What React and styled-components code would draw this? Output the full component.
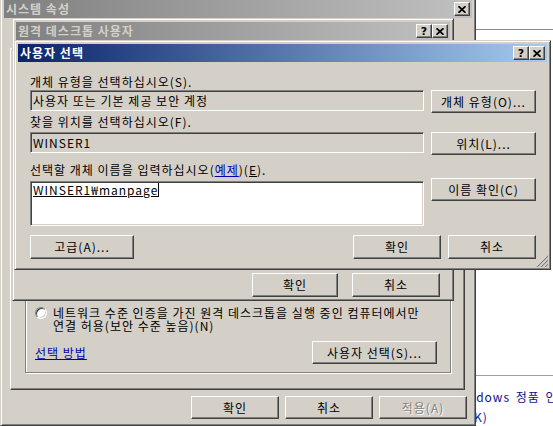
import React from "react";
import styled, { createGlobalStyle } from "styled-components";

const GlobalStyle = createGlobalStyle`
  html, body {
    margin: 0;
    padding: 0;
    background: #fff;
  }
  body {
    font-family: "Noto Sans CJK KR", "Noto Sans", sans-serif;
    font-size: 12px;
    letter-spacing: 1px;
    color: #000;
  }
`;

const Desktop = styled.div`
  position: relative;
  width: 553px;
  height: 426px;
  overflow: hidden;
  background: #fff;
`;

// page behind the dialogs, only its right edge shows
const BackPane = styled.div`
  position: absolute;
  left: 452px;
  top: 0;
  right: 0;
  bottom: 0;
  display: flex;
  flex-direction: column;
  overflow: hidden;
`;

const BackBand = styled.div`
  flex: none;
  height: ${(p) => p.$h}px;
  border-bottom: 1px solid ${(p) => p.$line};
`;

const BackText = styled.div`
  color: #10108a;
  line-height: 20px;
  word-spacing: 2px;
  white-space: nowrap;
  padding-left: ${(p) => p.$indent || 0}px;
  margin-top: ${(p) => p.$top || 0}px;
`;

const Window = styled.div`
  position: absolute;
  left: ${(p) => p.$x}px;
  top: ${(p) => p.$y}px;
  width: ${(p) => p.$w}px;
  height: ${(p) => p.$h}px;
  box-sizing: border-box;
  background: #d4d0c8;
  border: 1px solid;
  border-color: #d4d0c8 #404040 #404040 #d4d0c8;
  box-shadow: inset 1px 1px #fff, inset -1px -1px #808080;
  padding: 3px;
  display: flex;
  flex-direction: column;
`;

const TitleBar = styled.div`
  flex: none;
  height: 18px;
  display: flex;
  align-items: center;
  padding: 0 2px 0 2px;
  background: ${(p) =>
    p.$active
      ? "linear-gradient(to right, #0a246a, #a6caf0)"
      : "linear-gradient(to right, #808080, #c0c0c0)"};
  color: ${(p) => (p.$active ? "#fff" : "#d4d0c8")};
  font-weight: bold;
`;

const TitleText = styled.span`
  flex: 1;
  line-height: 18px;
  white-space: nowrap;
  overflow: hidden;
`;

const TitleButton = styled.div`
  flex: none;
  width: 16px;
  height: 14px;
  box-sizing: border-box;
  background: #d4d0c8;
  border: 1px solid;
  border-color: #fff #404040 #404040 #fff;
  box-shadow: inset -1px -1px #808080;
  display: flex;
  align-items: center;
  justify-content: center;
  color: #000;
  font: bold 11px "DejaVu Sans", sans-serif;
  letter-spacing: 0;
  line-height: 1;
`;

const CloseIcon = () => (
  <svg width="8" height="7" viewBox="0 0 8 7">
    <path d="M0.5 0.2 L7.5 6.8 M7.5 0.2 L0.5 6.8" stroke="#000" strokeWidth="1.7" />
  </svg>
);

const PushButton = styled.button`
  flex: none;
  box-sizing: border-box;
  width: ${(p) => p.$w}px;
  height: ${(p) => p.$h || 23}px;
  margin: ${(p) => p.$m || "0"};
  padding: 0;
  background: #d4d0c8;
  border: 1px solid;
  border-color: #fff #404040 #404040 #fff;
  box-shadow: inset -1px -1px #808080;
  font: 12px "Noto Sans CJK KR", "Noto Sans", sans-serif;
  letter-spacing: 1px;
  line-height: 14px;
  color: ${(p) => (p.$off ? "#808080" : "#000")};
  text-shadow: ${(p) => (p.$off ? "1px 1px #fff" : "none")};
  display: flex;
  align-items: center;
  justify-content: center;
  white-space: nowrap;
`;

/* ---------- 시스템 속성 ---------- */

const SysBody = styled.div`
  flex: 1;
  display: flex;
  flex-direction: column;
  padding: 0 5px 3px 6px;
`;

const TabPanel = styled.div`
  flex: 1;
  margin: 30px 2px 0 0;
  border: 1px solid;
  border-color: #fff #404040 #404040 #fff;
  box-shadow: inset -1px -1px #808080;
  display: flex;
  flex-direction: column;
  padding: 0 13px 16px 14px;
`;

const GroupBox = styled.div`
  flex: 1;
  margin-top: 40px;
  border: 1px solid #808080;
  box-shadow: inset 1px 1px #fff, 1px 1px #fff;
  display: flex;
  flex-direction: column;
  justify-content: flex-end;
  padding: 0 13px 8px 9px;
`;

const RadioRow = styled.div`
  display: flex;
  align-items: flex-start;
  gap: 6px;
`;

const Radio = styled.span`
  flex: none;
  width: 12px;
  height: 12px;
  box-sizing: border-box;
  margin-top: 1px;
  border-radius: 50%;
  background: #fff;
  border: 1px solid;
  border-color: #808080 #fff #fff #808080;
  box-shadow: inset 1px 1px #404040, inset -1px -1px #d4d0c8;
`;

const RadioText = styled.div`
  line-height: 13px;
  white-space: nowrap;
`;

const LinkRow = styled.div`
  display: flex;
  align-items: center;
  justify-content: space-between;
  margin-top: 9px;
`;

const Link = styled.span`
  color: #0000b0;
  text-decoration: underline;
  line-height: 14px;
`;

const ButtonRow = styled.div`
  flex: none;
  display: flex;
  justify-content: flex-end;
  align-items: center;
  gap: ${(p) => p.$gap || 0}px;
  margin-top: ${(p) => p.$top || 0}px;
  padding-right: ${(p) => p.$right || 0}px;
`;

/* ---------- 원격 데스크톱 사용자 ---------- */

const Filler = styled.div`
  flex: 1;
`;

/* ---------- 사용자 선택 ---------- */

const PickerBody = styled.div`
  flex: 1;
  display: grid;
  grid-template-columns: 1fr 105px;
  column-gap: 7px;
  align-content: start;
  align-items: start;
  padding: 13px 11px 0 12px;
`;

const Label = styled.div`
  grid-column: 1 / -1;
  line-height: 14px;
  white-space: nowrap;
  margin-top: ${(p) => p.$top || 0}px;
  margin-bottom: ${(p) => p.$bottom || 0}px;
`;

const Mnemonic = styled.span`
  text-decoration: underline;
`;

const Field = styled.div`
  grid-column: 1;
  box-sizing: border-box;
  height: ${(p) => p.$h}px;
  margin-top: ${(p) => p.$top || 0}px;
  background: ${(p) => (p.$white ? "#fff" : "#d4d0c8")};
  border: 1px solid;
  border-color: #808080 #fff #fff #808080;
  box-shadow: inset 1px 1px #404040, inset -1px -1px #d4d0c8;
  padding: ${(p) => (p.$white ? "1px 2px" : "0 2px")};
  display: flex;
  align-items: ${(p) => (p.$white ? "flex-start" : "center")};
  line-height: 14px;
  white-space: nowrap;
`;

const Resolved = styled.span`
  text-decoration: underline;
  line-height: 14px;
`;

const Caret = styled.span`
  display: inline-block;
  width: 1px;
  height: 14px;
  background: #000;
`;

const BottomRow = styled.div`
  grid-column: 1 / -1;
  display: flex;
  align-items: center;
  margin-top: 9px;
`;

const Spacer = styled.div`
  flex: 1;
`;

const Grip = styled.svg`
  position: absolute;
  right: 2px;
  bottom: 2px;
`;

const ResizeGrip = () => (
  <Grip width="12" height="12" viewBox="0 0 12 12">
    <path d="M11 1 L1 11 M11 5 L5 11 M11 9 L9 11" stroke="#fff" strokeWidth="1" />
    <path d="M12 1 L1 12 M12 5 L5 12 M12 9 L9 12" stroke="#808080" strokeWidth="1.2" />
  </Grip>
);

export default function App() {
  return (
    <Desktop>
      <GlobalStyle />

      <BackPane>
        <BackBand $h={29} $line="#8a8a8a" />
        <BackBand $h={345} $line="#a0a0a0" />
        <BackText $top={11}>Windows 정품 인증</BackText>
        <BackText $indent={17}>(K)</BackText>
      </BackPane>

      <Window $x={0} $y={-4} $w={476} $h={430}>
        <TitleBar>
          <TitleText>시스템 속성</TitleText>
          <TitleButton>
            <CloseIcon />
          </TitleButton>
        </TitleBar>
        <SysBody>
          <TabPanel>
            <GroupBox>
              <RadioRow>
                <Radio />
                <RadioText>
                  네트워크 수준 인증을 가진 원격 데스크톱을 실행 중인 컴퓨터에서만
                  <br />
                  연결 허용(보안 수준 높음)(N)
                </RadioText>
              </RadioRow>
              <LinkRow>
                <Link>선택 방법</Link>
                <PushButton $w={125}>사용자 선택(S)...</PushButton>
              </LinkRow>
            </GroupBox>
          </TabPanel>
          <ButtonRow $gap={6} $top={6}>
            <PushButton $w={88}>확인</PushButton>
            <PushButton $w={88}>취소</PushButton>
            <PushButton $w={88} $off>
              적용(A)
            </PushButton>
          </ButtonRow>
        </SysBody>
      </Window>

      <Window $x={12} $y={18} $w={442} $h={283}>
        <TitleBar>
          <TitleText>원격 데스크톱 사용자</TitleText>
          <TitleButton>?</TitleButton>
          <TitleButton>
            <CloseIcon />
          </TitleButton>
        </TitleBar>
        <Filler />
        <ButtonRow $gap={14} $right={10}>
          <PushButton $w={86} $h={24}>확인</PushButton>
          <PushButton $w={88} $h={24}>취소</PushButton>
        </ButtonRow>
      </Window>

      <Window $x={14} $y={40} $w={537} $h={230}>
        <TitleBar $active>
          <TitleText>사용자 선택</TitleText>
          <TitleButton>?</TitleButton>
          <TitleButton>
            <CloseIcon />
          </TitleButton>
        </TitleBar>
        <PickerBody>
          <Label $bottom={1}>개체 유형을 선택하십시오(S).</Label>
          <Field $h={21}>사용자 또는 기본 제공 보안 계정</Field>
          <PushButton $w={105}>개체 유형(O)...</PushButton>

          <Label $top={2}>찾을 위치를 선택하십시오(F).</Label>
          <Field $h={21} $top={3}>WINSER1</Field>
          <PushButton $w={105} $m="3px 0 0 0">위치(L)...</PushButton>

          <Label $top={8}>
            선택할 개체 이름을 입력하십시오(<Link>예제</Link>)(<Mnemonic>E</Mnemonic>).
          </Label>
          <Field $h={45} $top={4} $white>
            <Resolved>WINSER1₩manpage</Resolved>
            <Caret />
          </Field>
          <PushButton $w={105} $m="1px 0 0 0">이름 확인(C)</PushButton>

          <BottomRow>
            <PushButton $w={104} $h={24}>고급(A)...</PushButton>
            <Spacer />
            <PushButton $w={88} $h={24}>확인</PushButton>
            <PushButton $w={88} $h={24} $m="0 0 0 7px">취소</PushButton>
          </BottomRow>
        </PickerBody>
        <ResizeGrip />
      </Window>
    </Desktop>
  );
}
